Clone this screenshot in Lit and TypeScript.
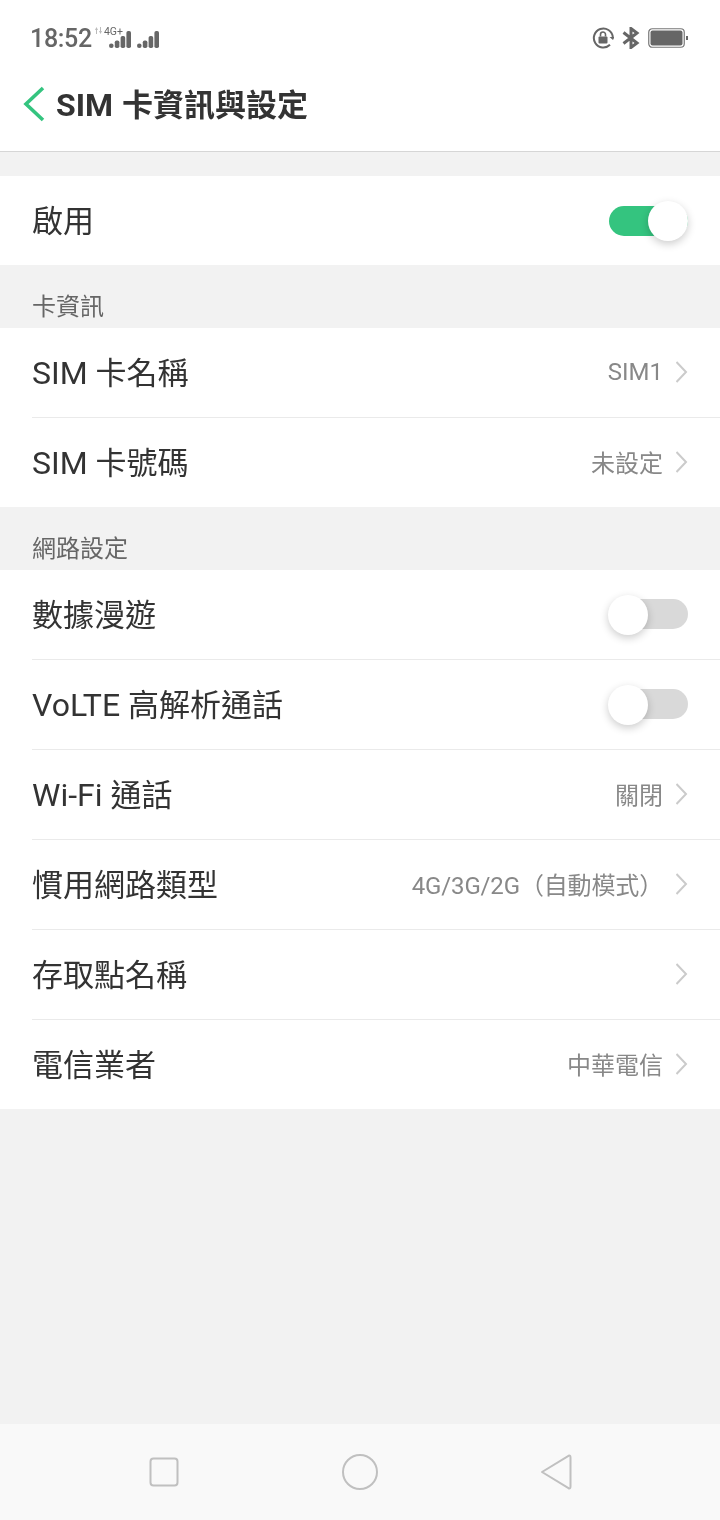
import { css, html, LitElement, svg } from "lit";
import { customElement } from "lit/decorators.js";

type Row = { label: string; value?: string; toggle?: boolean; on?: boolean };

const sections: { title?: string; rows: Row[] }[] = [
  { rows: [{ label: "啟用", toggle: true, on: true }] },
  {
    title: "卡資訊",
    rows: [
      { label: "SIM 卡名稱", value: "SIM1" },
      { label: "SIM 卡號碼", value: "未設定" },
    ],
  },
  {
    title: "網路設定",
    rows: [
      { label: "數據漫遊", toggle: true },
      { label: "VoLTE 高解析通話", toggle: true },
      { label: "Wi-Fi 通話", value: "關閉" },
      { label: "慣用網路類型", value: "4G/3G/2G（自動模式）" },
      { label: "存取點名稱", value: "" },
      { label: "電信業者", value: "中華電信" },
    ],
  },
];

const bars = svg`
  <rect x="0" y="12.500" width="4.600" height="4.500" rx="2.200" />
  <rect x="5.800" y="9.500" width="4.600" height="7.500" rx="1.800" />
  <rect x="11.600" y="5" width="4.600" height="12" rx="1.800" />
  <rect x="17.400" y="0" width="4.600" height="17" rx="1.800" />
`;

// latin runs sit a point larger than the CJK around them
const mixed = (text: string) =>
  text
    .split(/([\x20-\x7e]+)/)
    .map((part) => (/[\x20-\x7e]/.test(part) ? html`<span class="latin">${part}</span>` : part));

@customElement("app-root")
export class AppRoot extends LitElement {
  static styles = css`
    :host {
      display: flex;
      flex-direction: column;
      height: 1520px;
      background: #f2f2f2;
      font-family: Roboto, "Noto Sans CJK TC", sans-serif;
      color: #333;
      overflow: hidden;
      will-change: transform;
    }
    .top {
      height: 151px;
      background: #fff;
      border-bottom: 1px solid #d6d6d6;
      display: flex;
      flex-direction: column;
    }
    .status {
      height: 76px;
      display: flex;
      align-items: center;
      padding: 0 32px 0 30px;
      color: #666;
    }
    .time {
      font-size: 25px;
      font-weight: 500;
      letter-spacing: -0.3px;
    }
    .net {
      position: relative;
      display: flex;
      gap: 6px;
      margin-left: 17px;
      padding-top: 2px;
    }
    .net svg {
      display: block;
      fill: #666;
    }
    .tag {
      position: absolute;
      left: -5px;
      top: -3px;
      font-size: 10.5px;
      line-height: 12px;
    }
    .net svg.arrows {
      position: absolute;
      left: -14px;
      top: -2px;
      fill: #bbb;
    }
    .status-right {
      margin-left: auto;
      display: flex;
      align-items: center;
      gap: 8px;
    }
    .header {
      flex: 1;
      display: flex;
      align-items: center;
      padding: 0 0 22px 22px;
      gap: 10px;
      font-size: 31px;
      font-weight: 700;
      word-spacing: 1px;
      color: #333;
    }
    .header svg {
      margin-top: 2px;
    }
    .latin {
      font-size: 32px;
    }
    .section-title {
      height: 63px;
      box-sizing: border-box;
      padding: 26px 32px 0;
      font-size: 24px;
      line-height: 32px;
      color: #666;
    }
    .spacer {
      height: 24px;
    }
    .card {
      background: #fff;
    }
    .row {
      height: 90px;
      margin-left: 32px;
      padding-right: 32px;
      box-sizing: border-box;
      display: flex;
      align-items: center;
      border-bottom: 1px solid #eaeaea;
    }
    .row:last-child {
      height: 89px;
      border-bottom: none;
    }
    .label {
      font-size: 31px;
      color: #333;
      margin-top: -4px;
    }
    .value {
      margin-left: auto;
      margin-top: -2px;
      font-size: 24px;
      color: #888;
    }
    .value.tight {
      letter-spacing: -0.15px;
    }
    .chev {
      margin-left: 13px;
      margin-top: -2px;
      display: block;
    }
    .value-none {
      margin-left: auto;
    }
    .switch {
      position: relative;
      margin-left: auto;
      margin-top: -1px;
      width: 79px;
      height: 30px;
      border-radius: 15px;
      background: #d9d9d9;
    }
    .switch.on {
      margin-top: 0;
      background: #34c47f;
    }
    .knob {
      position: absolute;
      left: -1px;
      top: -4px;
      width: 40px;
      height: 40px;
      border-radius: 50%;
      background: #fff;
      box-shadow: 0 3px 8px rgba(0, 0, 0, 0.2);
    }
    .switch.on .knob {
      left: 39px;
      top: -5px;
    }
    .fill {
      flex: 1;
    }
    .nav {
      height: 96px;
      background: #f9f9f9;
      display: flex;
      align-items: center;
      justify-content: center;
      gap: 162px;
    }
    .nav svg {
      display: block;
      fill: none;
      stroke: #c0c0c0;
      stroke-width: 2;
      stroke-linejoin: round;
    }
  `;

  private renderRow(r: Row) {
    return html`<div class="row">
      <span class="label">${mixed(r.label)}</span>
      ${r.toggle
        ? html`<div class="switch ${r.on ? "on" : ""}"><div class="knob"></div></div>`
        : html`${r.value
              ? html`<span class="value ${r.value.includes("/") ? "tight" : ""}">${r.value}</span>`
              : html`<span class="value-none"></span>`}
            <svg class="chev" width="12" height="22" viewBox="0 0 12 22" fill="none" stroke="#cbcbcb" stroke-width="2">
              <path d="M0.500 1 L10 11 L0.500 21" />
            </svg>`}
    </div>`;
  }

  render() {
    return html`
      <div class="top">
        <div class="status">
          <span class="time">18:52</span>
          <div class="net">
            <svg class="arrows" width="7" height="7" viewBox="0 0 7 7">
              <path d="M0 3 L1.500 0 L3 3 H2 V7 H1 V3 Z M4 4 H5 V0 H6 V4 H7 L5.500 7 Z" />
            </svg>
            <span class="tag">4G+</span>
            <svg width="22" height="17" viewBox="0 0 22 17">${bars}</svg>
            <svg width="22" height="17" viewBox="0 0 22 17">${bars}</svg>
          </div>
          <div class="status-right">
            <svg width="22" height="22" viewBox="0 0 22 22" fill="none">
              <g transform="translate(0.500 0)">
                <path d="M17.500 17.800 A9.500 9.500 0 1 1 20.300 10" stroke="#666" stroke-width="2" />
                <path d="M20.500 13 L17 10 H22 Z" fill="#666" />
                <rect x="6" y="9.500" width="9" height="7" rx="1" fill="#666" />
                <path d="M8 9.500 V7.500 a2.500 2.500 0 0 1 5 0 V9.500" stroke="#666" stroke-width="1.600" />
              </g>
            </svg>
            <svg width="18" height="22" viewBox="0 0 18 22" fill="none" stroke="#666" stroke-width="3">
              <path d="M1.500 5.500 L15 16 L9 20.500 V1.500 L15 6 L1.500 16.500" />
            </svg>
            <svg width="40" height="20" viewBox="0 0 40 20">
              <rect x="0.750" y="0.750" width="35.500" height="18.500" rx="3.500" fill="none" stroke="#777" stroke-width="1.200" />
              <rect x="2.500" y="2.500" width="32" height="15" rx="2" fill="#666" />
              <rect x="38" y="8" width="2" height="4" fill="#666" />
            </svg>
          </div>
        </div>
        <div class="header">
          <svg width="24" height="36" viewBox="0 0 24 36" fill="none" stroke="#34c47f" stroke-width="3.600">
            <path d="M21 2 L4 18 L21 34" />
          </svg>
          <span>${mixed("SIM 卡資訊與設定")}</span>
        </div>
      </div>
      ${sections.map(
        (s) => html`
          ${s.title
            ? html`<div class="section-title">${s.title}</div>`
            : html`<div class="spacer"></div>`}
          <div class="card">${s.rows.map((r) => this.renderRow(r))}</div>
        `
      )}
      <div class="fill"></div>
      <div class="nav">
        <svg width="32" height="32" viewBox="0 0 32 32"><rect x="2.500" y="2.500" width="27" height="27" rx="3" /></svg>
        <svg width="36" height="36" viewBox="0 0 36 36"><circle cx="18" cy="18" r="17" /></svg>
        <svg width="32" height="36" viewBox="0 0 32 36"><path d="M2 18 L28.500 1.800 Q30.500 1 30.500 3.500 V32.500 Q30.500 35 28.500 34.200 Z" /></svg>
      </div>
    `;
  }
}
